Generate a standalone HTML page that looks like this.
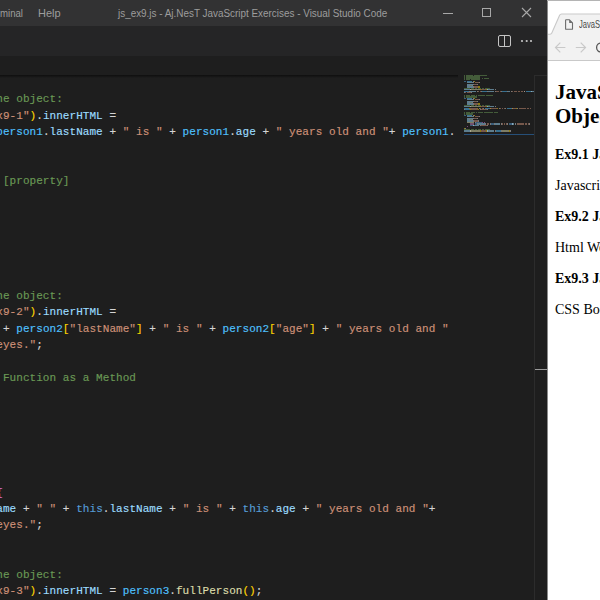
<!DOCTYPE html>
<html><head><meta charset="utf-8">
<style>
*{margin:0;padding:0;box-sizing:border-box}
html,body{width:600px;height:600px;overflow:hidden;background:#1e1e1e}
.abs{position:absolute}
#title{left:0;top:0;width:547px;height:26px;background:#323233;font-family:"Liberation Sans",sans-serif;font-size:11px;color:#9d9d9d;white-space:nowrap;overflow:hidden}
#title span{position:absolute;top:7px}
#tabs{left:0;top:26px;width:547px;height:30px;background:#252526}
#crumbs{left:0;top:56px;width:547px;height:19px;background:#1e1e1e}
#shadow{left:0;top:75px;width:458px;height:3px;background:linear-gradient(#0e0e0e,rgba(30,30,30,0))}
#code{left:-3.7px;top:91.3px;font-family:"Liberation Mono",monospace;font-size:11px;letter-spacing:0.05px;line-height:16.4px;white-space:normal;color:#d4d4d4}
#code div{height:16.4px;white-space:pre;-webkit-text-stroke:0.15px}
.c{color:#6a9955}.s{color:#ce9178}.v{color:#9cdcfe}.k{color:#569cd6}.f{color:#dcdcaa}.g{color:#ffd700}.o{color:#da70d6}.w{color:#4fc1ff}
#vscroll{left:534px;top:75px;width:13px;height:525px;border-left:1px solid #2c2c2c;border-top:1px solid #2c2c2c}
#browser{left:547px;top:0;width:53px;height:600px;background:#fff;overflow:hidden}
#minimap{left:0;top:0;width:0;height:0}
#minimap i{position:absolute;height:1.2px;opacity:0.5}
#browser .t{position:absolute;white-space:nowrap;font-family:"Liberation Serif",serif;color:#000;line-height:1}
</style></head><body>
<div id="title" class="abs">
  <span style="left:0px;transform:scaleX(0.875);transform-origin:0 0">minal</span>
  <span style="left:38px">Help</span>
  <span style="left:118.3px;top:7.9px;font-size:10px;transform:scaleX(0.99);transform-origin:0 0">js_ex9.js - Aj.NesT JavaScript Exercises - Visual Studio Code</span>
  <div class="abs" style="left:443px;top:13px;width:10px;height:1px;background:#a8a8a8"></div>
  <div class="abs" style="left:482px;top:8px;width:9px;height:9px;border:1px solid #a8a8a8"></div>
  <svg class="abs" style="left:521px;top:7px" width="11" height="11" viewBox="0 0 11 11"><path d="M1 1L10 10M10 1L1 10" stroke="#a8a8a8" stroke-width="1.1"/></svg>
</div>
<div id="tabs" class="abs">
  <svg class="abs" style="left:498px;top:9px" width="13" height="12" viewBox="0 0 13 12"><rect x="0.5" y="0.5" width="12" height="11" rx="1.5" fill="none" stroke="#c5c5c5"/><path d="M6.5 0.5V11.5" stroke="#c5c5c5"/></svg>
  <svg class="abs" style="left:519px;top:12px" width="16" height="6" viewBox="0 0 16 6"><circle cx="3" cy="3" r="1.1" fill="#c5c5c5"/><circle cx="7.7" cy="3" r="1.1" fill="#c5c5c5"/><circle cx="12" cy="3" r="1.1" fill="#c5c5c5"/></svg>
</div>
<div id="crumbs" class="abs"></div>
<div id="code" class="abs">
<div><span class="c">he object:</span></div>
<div><span class="s">x9-1"</span><span class="g">)</span>.<span class="v">innerHTML</span> =</div>
<div><span class="w">person1</span>.<span class="v">lastName</span> + <span class="s">" is "</span> + <span class="w">person1</span>.<span class="v">age</span> + <span class="s">" years old and "</span>+ <span class="w">person1</span>.</div>
<div></div>
<div></div>
<div><span class="c"> [property]</span></div>
<div></div>
<div></div>
<div></div>
<div></div>
<div></div>
<div></div>
<div><span class="c">he object:</span></div>
<div><span class="s">x9-2"</span><span class="g">)</span>.<span class="v">innerHTML</span> =</div>
<div> + <span class="w">person2</span><span class="g">[</span><span class="s">"lastName"</span><span class="g">]</span> + <span class="s">" is "</span> + <span class="w">person2</span><span class="g">[</span><span class="s">"age"</span><span class="g">]</span> + <span class="s">" years old and "</span></div>
<div><span class="s">eyes."</span>;</div>
<div></div>
<div><span class="c"> Function as a Method</span></div>
<div></div>
<div></div>
<div></div>
<div></div>
<div></div>
<div></div>
<div><span class="o">{</span></div>
<div><span class="v">ame</span> + <span class="s">" "</span> + <span class="k">this</span>.<span class="v">lastName</span> + <span class="s">" is "</span> + <span class="k">this</span>.<span class="v">age</span> + <span class="s">" years old and "</span>+</div>
<div><span class="s">eyes."</span>;</div>
<div></div>
<div></div>
<div><span class="c">he object:</span></div>
<div><span class="s">x9-3"</span><span class="g">)</span>.<span class="v">innerHTML</span> = <span class="w">person3</span>.<span class="f">fullPerson</span><span class="g">()</span>;</div>
</div>
<div id="minimap" class="abs">
<i style="left:464.00px;top:75.05px;width:1.42px;background:#6a9955"></i>
<i style="left:466.13px;top:75.05px;width:7.10px;background:#6a9955"></i>
<i style="left:473.94px;top:75.05px;width:5.68px;background:#6a9955"></i>
<i style="left:480.33px;top:75.05px;width:7.10px;background:#6a9955"></i>
<i style="left:464.00px;top:76.47px;width:1.42px;background:#6a9955"></i>
<i style="left:466.13px;top:76.47px;width:13.49px;background:#6a9955"></i>
<i style="left:464.00px;top:77.89px;width:1.42px;background:#6a9955"></i>
<i style="left:466.13px;top:77.89px;width:13.49px;background:#6a9955"></i>
<i style="left:481.75px;top:77.89px;width:1.42px;background:#6a9955"></i>
<i style="left:483.88px;top:77.89px;width:4.97px;background:#6a9955"></i>
<i style="left:464.00px;top:79.31px;width:1.42px;background:#6a9955"></i>
<i style="left:466.13px;top:79.31px;width:4.26px;background:#6a9955"></i>
<i style="left:471.10px;top:79.31px;width:1.42px;background:#6a9955"></i>
<i style="left:473.23px;top:79.31px;width:6.39px;background:#6a9955"></i>
<i style="left:464.00px;top:80.73px;width:2.13px;background:#569cd6"></i>
<i style="left:466.84px;top:80.73px;width:4.97px;background:#4fc1ff"></i>
<i style="left:472.52px;top:80.73px;width:0.71px;background:#d4d4d4"></i>
<i style="left:473.94px;top:80.73px;width:0.71px;background:#ffd700"></i>
<i style="left:466.84px;top:82.15px;width:6.39px;background:#9cdcfe"></i>
<i style="left:473.23px;top:82.15px;width:0.71px;background:#d4d4d4"></i>
<i style="left:474.65px;top:82.15px;width:4.26px;background:#ce9178"></i>
<i style="left:478.91px;top:82.15px;width:0.71px;background:#d4d4d4"></i>
<i style="left:466.84px;top:83.57px;width:5.68px;background:#9cdcfe"></i>
<i style="left:472.52px;top:83.57px;width:0.71px;background:#d4d4d4"></i>
<i style="left:473.94px;top:83.57px;width:3.55px;background:#ce9178"></i>
<i style="left:477.49px;top:83.57px;width:0.71px;background:#d4d4d4"></i>
<i style="left:466.84px;top:84.99px;width:2.13px;background:#9cdcfe"></i>
<i style="left:468.97px;top:84.99px;width:0.71px;background:#d4d4d4"></i>
<i style="left:470.39px;top:84.99px;width:1.42px;background:#b5cea8"></i>
<i style="left:471.81px;top:84.99px;width:0.71px;background:#d4d4d4"></i>
<i style="left:466.84px;top:86.41px;width:5.68px;background:#9cdcfe"></i>
<i style="left:472.52px;top:86.41px;width:0.71px;background:#d4d4d4"></i>
<i style="left:473.94px;top:86.41px;width:4.26px;background:#ce9178"></i>
<i style="left:478.20px;top:86.41px;width:1.42px;background:#ffd700"></i>
<i style="left:464.00px;top:87.83px;width:6.39px;background:#6a9955"></i>
<i style="left:471.10px;top:87.83px;width:2.84px;background:#6a9955"></i>
<i style="left:474.65px;top:87.83px;width:2.84px;background:#6a9955"></i>
<i style="left:478.20px;top:87.83px;width:2.84px;background:#6a9955"></i>
<i style="left:481.75px;top:87.83px;width:2.13px;background:#6a9955"></i>
<i style="left:484.59px;top:87.83px;width:4.97px;background:#6a9955"></i>
<i style="left:464.00px;top:89.25px;width:5.68px;background:#9cdcfe"></i>
<i style="left:469.68px;top:89.25px;width:0.71px;background:#d4d4d4"></i>
<i style="left:470.39px;top:89.25px;width:9.94px;background:#dcdcaa"></i>
<i style="left:480.33px;top:89.25px;width:0.71px;background:#ffd700"></i>
<i style="left:481.04px;top:89.25px;width:4.97px;background:#ce9178"></i>
<i style="left:486.01px;top:89.25px;width:0.71px;background:#ffd700"></i>
<i style="left:486.72px;top:89.25px;width:0.71px;background:#d4d4d4"></i>
<i style="left:487.43px;top:89.25px;width:6.39px;background:#9cdcfe"></i>
<i style="left:494.53px;top:89.25px;width:0.71px;background:#d4d4d4"></i>
<i style="left:464.00px;top:90.67px;width:4.97px;background:#4fc1ff"></i>
<i style="left:468.97px;top:90.67px;width:0.71px;background:#d4d4d4"></i>
<i style="left:469.68px;top:90.67px;width:6.39px;background:#9cdcfe"></i>
<i style="left:476.78px;top:90.67px;width:0.71px;background:#d4d4d4"></i>
<i style="left:478.20px;top:90.67px;width:0.71px;background:#ce9178"></i>
<i style="left:479.62px;top:90.67px;width:0.71px;background:#ce9178"></i>
<i style="left:481.04px;top:90.67px;width:0.71px;background:#d4d4d4"></i>
<i style="left:482.46px;top:90.67px;width:4.97px;background:#4fc1ff"></i>
<i style="left:487.43px;top:90.67px;width:0.71px;background:#d4d4d4"></i>
<i style="left:488.14px;top:90.67px;width:5.68px;background:#9cdcfe"></i>
<i style="left:494.53px;top:90.67px;width:0.71px;background:#d4d4d4"></i>
<i style="left:495.95px;top:90.67px;width:0.71px;background:#ce9178"></i>
<i style="left:497.37px;top:90.67px;width:1.42px;background:#ce9178"></i>
<i style="left:499.50px;top:90.67px;width:0.71px;background:#ce9178"></i>
<i style="left:500.92px;top:90.67px;width:0.71px;background:#d4d4d4"></i>
<i style="left:502.34px;top:90.67px;width:4.97px;background:#4fc1ff"></i>
<i style="left:507.31px;top:90.67px;width:0.71px;background:#d4d4d4"></i>
<i style="left:508.02px;top:90.67px;width:2.13px;background:#9cdcfe"></i>
<i style="left:510.86px;top:90.67px;width:0.71px;background:#d4d4d4"></i>
<i style="left:512.28px;top:90.67px;width:0.71px;background:#ce9178"></i>
<i style="left:513.70px;top:90.67px;width:3.55px;background:#ce9178"></i>
<i style="left:517.96px;top:90.67px;width:2.13px;background:#ce9178"></i>
<i style="left:520.80px;top:90.67px;width:2.13px;background:#ce9178"></i>
<i style="left:523.64px;top:90.67px;width:0.71px;background:#ce9178"></i>
<i style="left:524.35px;top:90.67px;width:0.71px;background:#d4d4d4"></i>
<i style="left:525.77px;top:90.67px;width:4.97px;background:#4fc1ff"></i>
<i style="left:530.74px;top:90.67px;width:0.71px;background:#d4d4d4"></i>
<i style="left:531.45px;top:90.67px;width:2.55px;background:#9cdcfe"></i>
<i style="left:464.00px;top:92.09px;width:0.71px;background:#d4d4d4"></i>
<i style="left:465.42px;top:92.09px;width:0.71px;background:#ce9178"></i>
<i style="left:466.84px;top:92.09px;width:4.26px;background:#ce9178"></i>
<i style="left:471.10px;top:92.09px;width:0.71px;background:#d4d4d4"></i>
<i style="left:464.00px;top:94.93px;width:1.42px;background:#6a9955"></i>
<i style="left:466.13px;top:94.93px;width:4.26px;background:#6a9955"></i>
<i style="left:471.10px;top:94.93px;width:4.26px;background:#6a9955"></i>
<i style="left:476.07px;top:94.93px;width:1.42px;background:#6a9955"></i>
<i style="left:478.20px;top:94.93px;width:7.10px;background:#6a9955"></i>
<i style="left:486.01px;top:94.93px;width:7.10px;background:#6a9955"></i>
<i style="left:464.00px;top:96.35px;width:1.42px;background:#6a9955"></i>
<i style="left:466.13px;top:96.35px;width:10.65px;background:#6a9955"></i>
<i style="left:464.00px;top:97.77px;width:2.13px;background:#569cd6"></i>
<i style="left:466.84px;top:97.77px;width:4.97px;background:#4fc1ff"></i>
<i style="left:472.52px;top:97.77px;width:0.71px;background:#d4d4d4"></i>
<i style="left:473.94px;top:97.77px;width:0.71px;background:#ffd700"></i>
<i style="left:466.84px;top:99.19px;width:6.39px;background:#9cdcfe"></i>
<i style="left:473.23px;top:99.19px;width:0.71px;background:#d4d4d4"></i>
<i style="left:474.65px;top:99.19px;width:4.26px;background:#ce9178"></i>
<i style="left:478.91px;top:99.19px;width:0.71px;background:#d4d4d4"></i>
<i style="left:466.84px;top:100.61px;width:5.68px;background:#9cdcfe"></i>
<i style="left:472.52px;top:100.61px;width:0.71px;background:#d4d4d4"></i>
<i style="left:473.94px;top:100.61px;width:3.55px;background:#ce9178"></i>
<i style="left:477.49px;top:100.61px;width:0.71px;background:#d4d4d4"></i>
<i style="left:466.84px;top:102.03px;width:2.13px;background:#9cdcfe"></i>
<i style="left:468.97px;top:102.03px;width:0.71px;background:#d4d4d4"></i>
<i style="left:470.39px;top:102.03px;width:1.42px;background:#b5cea8"></i>
<i style="left:471.81px;top:102.03px;width:0.71px;background:#d4d4d4"></i>
<i style="left:466.84px;top:103.45px;width:5.68px;background:#9cdcfe"></i>
<i style="left:472.52px;top:103.45px;width:0.71px;background:#d4d4d4"></i>
<i style="left:473.94px;top:103.45px;width:4.26px;background:#ce9178"></i>
<i style="left:478.20px;top:103.45px;width:1.42px;background:#ffd700"></i>
<i style="left:464.00px;top:104.87px;width:6.39px;background:#6a9955"></i>
<i style="left:471.10px;top:104.87px;width:2.84px;background:#6a9955"></i>
<i style="left:474.65px;top:104.87px;width:2.84px;background:#6a9955"></i>
<i style="left:478.20px;top:104.87px;width:2.84px;background:#6a9955"></i>
<i style="left:481.75px;top:104.87px;width:2.13px;background:#6a9955"></i>
<i style="left:484.59px;top:104.87px;width:4.97px;background:#6a9955"></i>
<i style="left:464.00px;top:106.29px;width:5.68px;background:#9cdcfe"></i>
<i style="left:469.68px;top:106.29px;width:0.71px;background:#d4d4d4"></i>
<i style="left:470.39px;top:106.29px;width:9.94px;background:#dcdcaa"></i>
<i style="left:480.33px;top:106.29px;width:0.71px;background:#ffd700"></i>
<i style="left:481.04px;top:106.29px;width:4.97px;background:#ce9178"></i>
<i style="left:486.01px;top:106.29px;width:0.71px;background:#ffd700"></i>
<i style="left:486.72px;top:106.29px;width:0.71px;background:#d4d4d4"></i>
<i style="left:487.43px;top:106.29px;width:6.39px;background:#9cdcfe"></i>
<i style="left:494.53px;top:106.29px;width:0.71px;background:#d4d4d4"></i>
<i style="left:464.00px;top:107.71px;width:4.97px;background:#4fc1ff"></i>
<i style="left:468.97px;top:107.71px;width:0.71px;background:#ffd700"></i>
<i style="left:469.68px;top:107.71px;width:7.81px;background:#ce9178"></i>
<i style="left:477.49px;top:107.71px;width:0.71px;background:#ffd700"></i>
<i style="left:478.91px;top:107.71px;width:0.71px;background:#d4d4d4"></i>
<i style="left:480.33px;top:107.71px;width:0.71px;background:#ce9178"></i>
<i style="left:481.75px;top:107.71px;width:0.71px;background:#ce9178"></i>
<i style="left:483.17px;top:107.71px;width:0.71px;background:#d4d4d4"></i>
<i style="left:484.59px;top:107.71px;width:4.97px;background:#4fc1ff"></i>
<i style="left:489.56px;top:107.71px;width:0.71px;background:#ffd700"></i>
<i style="left:490.27px;top:107.71px;width:7.10px;background:#ce9178"></i>
<i style="left:497.37px;top:107.71px;width:0.71px;background:#ffd700"></i>
<i style="left:498.79px;top:107.71px;width:0.71px;background:#d4d4d4"></i>
<i style="left:500.21px;top:107.71px;width:0.71px;background:#ce9178"></i>
<i style="left:501.63px;top:107.71px;width:1.42px;background:#ce9178"></i>
<i style="left:503.76px;top:107.71px;width:0.71px;background:#ce9178"></i>
<i style="left:505.18px;top:107.71px;width:0.71px;background:#d4d4d4"></i>
<i style="left:506.60px;top:107.71px;width:4.97px;background:#4fc1ff"></i>
<i style="left:511.57px;top:107.71px;width:0.71px;background:#ffd700"></i>
<i style="left:512.28px;top:107.71px;width:3.55px;background:#ce9178"></i>
<i style="left:515.83px;top:107.71px;width:0.71px;background:#ffd700"></i>
<i style="left:517.25px;top:107.71px;width:0.71px;background:#d4d4d4"></i>
<i style="left:518.67px;top:107.71px;width:0.71px;background:#ce9178"></i>
<i style="left:520.09px;top:107.71px;width:3.55px;background:#ce9178"></i>
<i style="left:524.35px;top:107.71px;width:2.13px;background:#ce9178"></i>
<i style="left:527.19px;top:107.71px;width:2.13px;background:#ce9178"></i>
<i style="left:530.03px;top:107.71px;width:0.71px;background:#ce9178"></i>
<i style="left:464.00px;top:109.13px;width:0.71px;background:#d4d4d4"></i>
<i style="left:465.42px;top:109.13px;width:4.97px;background:#4fc1ff"></i>
<i style="left:470.39px;top:109.13px;width:0.71px;background:#ffd700"></i>
<i style="left:471.10px;top:109.13px;width:7.10px;background:#ce9178"></i>
<i style="left:478.20px;top:109.13px;width:0.71px;background:#ffd700"></i>
<i style="left:479.62px;top:109.13px;width:0.71px;background:#d4d4d4"></i>
<i style="left:481.04px;top:109.13px;width:0.71px;background:#ce9178"></i>
<i style="left:482.46px;top:109.13px;width:4.26px;background:#ce9178"></i>
<i style="left:486.72px;top:109.13px;width:0.71px;background:#d4d4d4"></i>
<i style="left:464.00px;top:111.97px;width:1.42px;background:#6a9955"></i>
<i style="left:466.13px;top:111.97px;width:4.26px;background:#6a9955"></i>
<i style="left:471.10px;top:111.97px;width:4.26px;background:#6a9955"></i>
<i style="left:476.07px;top:111.97px;width:1.42px;background:#6a9955"></i>
<i style="left:478.20px;top:111.97px;width:3.55px;background:#6a9955"></i>
<i style="left:482.46px;top:111.97px;width:0.71px;background:#6a9955"></i>
<i style="left:483.88px;top:111.97px;width:5.68px;background:#6a9955"></i>
<i style="left:490.27px;top:111.97px;width:1.42px;background:#6a9955"></i>
<i style="left:492.40px;top:111.97px;width:0.71px;background:#6a9955"></i>
<i style="left:493.82px;top:111.97px;width:4.26px;background:#6a9955"></i>
<i style="left:464.00px;top:113.39px;width:1.42px;background:#6a9955"></i>
<i style="left:466.13px;top:113.39px;width:7.10px;background:#6a9955"></i>
<i style="left:464.00px;top:114.81px;width:2.13px;background:#569cd6"></i>
<i style="left:466.84px;top:114.81px;width:4.97px;background:#4fc1ff"></i>
<i style="left:472.52px;top:114.81px;width:0.71px;background:#d4d4d4"></i>
<i style="left:473.94px;top:114.81px;width:0.71px;background:#ffd700"></i>
<i style="left:466.84px;top:116.23px;width:6.39px;background:#9cdcfe"></i>
<i style="left:473.23px;top:116.23px;width:0.71px;background:#d4d4d4"></i>
<i style="left:474.65px;top:116.23px;width:4.26px;background:#ce9178"></i>
<i style="left:478.91px;top:116.23px;width:0.71px;background:#d4d4d4"></i>
<i style="left:466.84px;top:117.65px;width:5.68px;background:#9cdcfe"></i>
<i style="left:472.52px;top:117.65px;width:0.71px;background:#d4d4d4"></i>
<i style="left:473.94px;top:117.65px;width:3.55px;background:#ce9178"></i>
<i style="left:477.49px;top:117.65px;width:0.71px;background:#d4d4d4"></i>
<i style="left:466.84px;top:119.07px;width:2.13px;background:#9cdcfe"></i>
<i style="left:468.97px;top:119.07px;width:0.71px;background:#d4d4d4"></i>
<i style="left:470.39px;top:119.07px;width:1.42px;background:#b5cea8"></i>
<i style="left:471.81px;top:119.07px;width:0.71px;background:#d4d4d4"></i>
<i style="left:466.84px;top:120.49px;width:5.68px;background:#9cdcfe"></i>
<i style="left:472.52px;top:120.49px;width:0.71px;background:#d4d4d4"></i>
<i style="left:473.94px;top:120.49px;width:4.26px;background:#ce9178"></i>
<i style="left:478.20px;top:120.49px;width:0.71px;background:#d4d4d4"></i>
<i style="left:466.84px;top:121.91px;width:7.10px;background:#dcdcaa"></i>
<i style="left:474.65px;top:121.91px;width:0.71px;background:#d4d4d4"></i>
<i style="left:476.07px;top:121.91px;width:5.68px;background:#569cd6"></i>
<i style="left:481.75px;top:121.91px;width:1.42px;background:#da70d6"></i>
<i style="left:483.88px;top:121.91px;width:0.71px;background:#da70d6"></i>
<i style="left:469.68px;top:123.33px;width:4.26px;background:#c586c0"></i>
<i style="left:474.65px;top:123.33px;width:2.84px;background:#569cd6"></i>
<i style="left:477.49px;top:123.33px;width:0.71px;background:#d4d4d4"></i>
<i style="left:478.20px;top:123.33px;width:6.39px;background:#9cdcfe"></i>
<i style="left:485.30px;top:123.33px;width:0.71px;background:#d4d4d4"></i>
<i style="left:486.72px;top:123.33px;width:0.71px;background:#ce9178"></i>
<i style="left:488.14px;top:123.33px;width:0.71px;background:#ce9178"></i>
<i style="left:489.56px;top:123.33px;width:0.71px;background:#d4d4d4"></i>
<i style="left:490.98px;top:123.33px;width:2.84px;background:#569cd6"></i>
<i style="left:493.82px;top:123.33px;width:0.71px;background:#d4d4d4"></i>
<i style="left:494.53px;top:123.33px;width:5.68px;background:#9cdcfe"></i>
<i style="left:500.92px;top:123.33px;width:0.71px;background:#d4d4d4"></i>
<i style="left:502.34px;top:123.33px;width:0.71px;background:#ce9178"></i>
<i style="left:503.76px;top:123.33px;width:1.42px;background:#ce9178"></i>
<i style="left:505.89px;top:123.33px;width:0.71px;background:#ce9178"></i>
<i style="left:507.31px;top:123.33px;width:0.71px;background:#d4d4d4"></i>
<i style="left:508.73px;top:123.33px;width:2.84px;background:#569cd6"></i>
<i style="left:511.57px;top:123.33px;width:0.71px;background:#d4d4d4"></i>
<i style="left:512.28px;top:123.33px;width:2.13px;background:#9cdcfe"></i>
<i style="left:515.12px;top:123.33px;width:0.71px;background:#d4d4d4"></i>
<i style="left:516.54px;top:123.33px;width:0.71px;background:#ce9178"></i>
<i style="left:517.96px;top:123.33px;width:3.55px;background:#ce9178"></i>
<i style="left:522.22px;top:123.33px;width:2.13px;background:#ce9178"></i>
<i style="left:525.06px;top:123.33px;width:2.13px;background:#ce9178"></i>
<i style="left:527.90px;top:123.33px;width:0.71px;background:#ce9178"></i>
<i style="left:528.61px;top:123.33px;width:0.71px;background:#d4d4d4"></i>
<i style="left:469.68px;top:124.75px;width:2.84px;background:#569cd6"></i>
<i style="left:472.52px;top:124.75px;width:0.71px;background:#d4d4d4"></i>
<i style="left:473.23px;top:124.75px;width:5.68px;background:#9cdcfe"></i>
<i style="left:479.62px;top:124.75px;width:0.71px;background:#d4d4d4"></i>
<i style="left:481.04px;top:124.75px;width:0.71px;background:#ce9178"></i>
<i style="left:482.46px;top:124.75px;width:4.26px;background:#ce9178"></i>
<i style="left:486.72px;top:124.75px;width:0.71px;background:#d4d4d4"></i>
<i style="left:466.84px;top:126.17px;width:0.71px;background:#da70d6"></i>
<i style="left:464.00px;top:127.59px;width:0.71px;background:#ffd700"></i>
<i style="left:464.71px;top:127.59px;width:0.71px;background:#d4d4d4"></i>
<i style="left:464.00px;top:129.01px;width:6.39px;background:#6a9955"></i>
<i style="left:471.10px;top:129.01px;width:2.84px;background:#6a9955"></i>
<i style="left:474.65px;top:129.01px;width:2.84px;background:#6a9955"></i>
<i style="left:478.20px;top:129.01px;width:2.84px;background:#6a9955"></i>
<i style="left:481.75px;top:129.01px;width:2.13px;background:#6a9955"></i>
<i style="left:484.59px;top:129.01px;width:4.97px;background:#6a9955"></i>
<i style="left:464.00px;top:130.43px;width:5.68px;background:#9cdcfe"></i>
<i style="left:469.68px;top:130.43px;width:0.71px;background:#d4d4d4"></i>
<i style="left:470.39px;top:130.43px;width:9.94px;background:#dcdcaa"></i>
<i style="left:480.33px;top:130.43px;width:0.71px;background:#ffd700"></i>
<i style="left:481.04px;top:130.43px;width:4.97px;background:#ce9178"></i>
<i style="left:486.01px;top:130.43px;width:0.71px;background:#ffd700"></i>
<i style="left:486.72px;top:130.43px;width:0.71px;background:#d4d4d4"></i>
<i style="left:487.43px;top:130.43px;width:6.39px;background:#9cdcfe"></i>
<i style="left:494.53px;top:130.43px;width:0.71px;background:#d4d4d4"></i>
<i style="left:495.95px;top:130.43px;width:4.97px;background:#4fc1ff"></i>
<i style="left:500.92px;top:130.43px;width:0.71px;background:#d4d4d4"></i>
<i style="left:501.63px;top:130.43px;width:7.10px;background:#dcdcaa"></i>
<i style="left:508.73px;top:130.43px;width:1.42px;background:#ffd700"></i>
<i style="left:510.15px;top:130.43px;width:0.71px;background:#d4d4d4"></i>
<i style="left:464px;top:133.80px;width:70px;height:1.4px;background:#264f78;opacity:1"></i>
</div>
<div id="shadow" class="abs"></div>
<div id="vscroll" class="abs">
  <div class="abs" style="left:0;top:292.6px;width:12px;height:1.6px;background:#9a9a9a"></div>
</div>
<div id="browser" class="abs">
  <div class="abs" style="left:0;top:0;width:1px;height:600px;background:#8a8a8a;z-index:5"></div>
  <div class="abs" style="left:0;top:0;width:53px;height:1px;background:#b4b4b4;z-index:5"></div>
  <svg class="abs" style="left:0;top:0" width="53" height="61" viewBox="0 0 53 61">
    <path d="M0 34.2H3.2Q4.3 34.2 4.8 33.1L12.6 15.3Q13.2 14 14.6 14H53V60H0Z" fill="#f2f2f2"/>
    <path d="M0 34.2H3.2Q4.3 34.2 4.8 33.1L12.6 15.3Q13.2 14 14.6 14H53" fill="none" stroke="#c9c9c9" stroke-width="1.1"/>
    <rect x="0" y="60" width="53" height="1" fill="#c9c9c9"/>
    <path d="M18.6 20.2Q18.6 19.7 19.1 19.7H22.2L25.5 23V28.9Q25.5 29.3 25 29.3H19.1Q18.6 29.3 18.6 28.9Z" fill="none" stroke="#6b6b6b" stroke-width="1.1" stroke-linejoin="round"/>
    <path d="M22.2 19.7V23H25.5Z" fill="#6b6b6b"/>
    <path d="M8.6 47.5H18.4M13.3 42.7L8.5 47.5L13.3 52.3" fill="none" stroke="#c9c9c9" stroke-width="1.2"/>
    <path d="M28.8 47.5H38.6M33.7 42.7L38.5 47.5L33.7 52.3" fill="none" stroke="#c9c9c9" stroke-width="1.2"/>
    <circle cx="54.1" cy="47.5" r="4.5" fill="none" stroke="#555" stroke-width="1.3"/>
  </svg>
  <div class="abs" style="left:32px;top:19.3px;font-family:'Liberation Sans',sans-serif;font-size:10.2px;color:#484848;white-space:nowrap;transform:scaleX(0.74);transform-origin:0 0">JavaScript Objects</div>
  <div class="t" style="left:8px;top:81.5px;font-size:21px;font-weight:bold">JavaScript</div>
  <div class="t" style="left:8px;top:105.6px;font-size:21px;font-weight:bold">Objects</div>
  <div class="t" style="left:8px;top:148px;font-size:14px;font-weight:bold">Ex9.1 JavaScript Objects</div>
  <div class="t" style="left:8px;top:179px;font-size:14px">Javascript is fun</div>
  <div class="t" style="left:8px;top:210px;font-size:14px;font-weight:bold">Ex9.2 JavaScript Objects</div>
  <div class="t" style="left:8px;top:241px;font-size:14px">Html Web</div>
  <div class="t" style="left:8px;top:272px;font-size:14px;font-weight:bold">Ex9.3 JavaScript Objects</div>
  <div class="t" style="left:8px;top:303px;font-size:14px">CSS Bootstrap</div>
</div>
</body></html>
